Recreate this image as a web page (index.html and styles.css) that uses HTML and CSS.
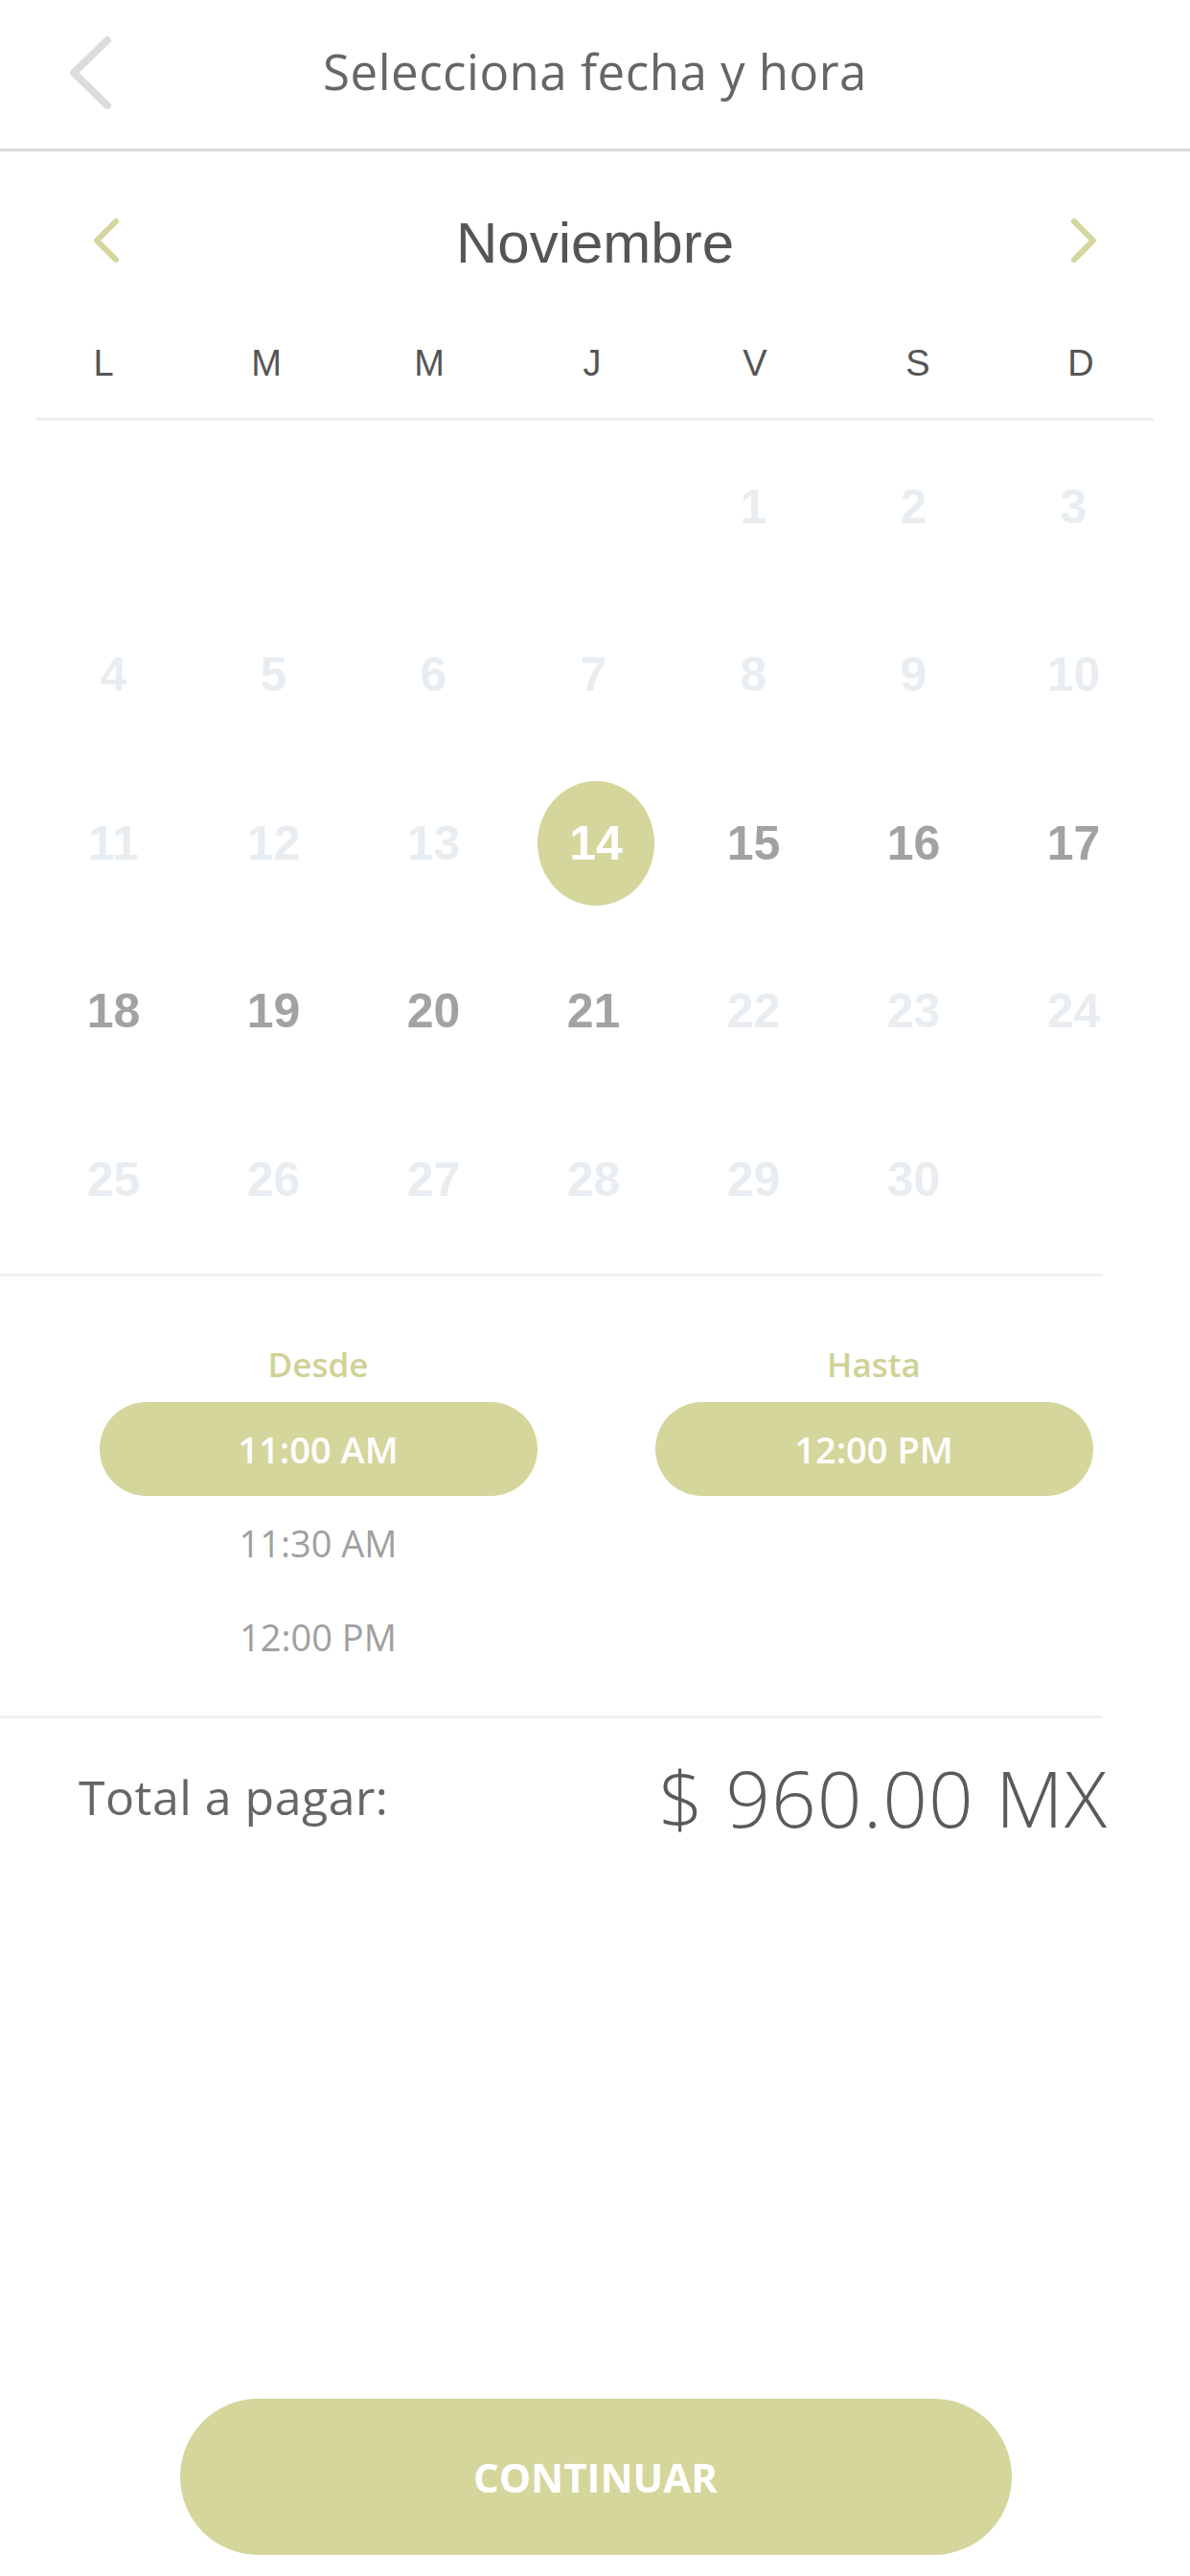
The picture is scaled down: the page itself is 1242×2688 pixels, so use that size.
FILE: index.html
```html
<!DOCTYPE html>
<html lang="es">
<head>
    <meta charset="UTF-8">
    <meta name="viewport" content="width=device-width, initial-scale=1.0">
    <title>Selecciona fecha y hora</title>
    <link rel="stylesheet" href="styles.css">
</head>
<body>
<div class="page">
    <header class="topbar">
        <button class="back" aria-label="Regresar">
            <svg width="50" height="80" viewBox="0 0 50 80"><polyline points="42,6 7,40 42,74" fill="none" stroke="#dcdcdc" stroke-width="8" stroke-linecap="round" stroke-linejoin="round"/></svg>
        </button>
        <h1 class="title">Selecciona fecha y hora</h1>
        <span></span>
    </header>

    <section class="calendar">
        <div class="month-nav">
            <button class="nav-btn" aria-label="Mes anterior">
                <svg width="30" height="48" viewBox="0 0 30 48"><polyline points="25,4 5,24 25,44" fill="none" stroke="#d4d69c" stroke-width="6" stroke-linecap="round" stroke-linejoin="round"/></svg>
            </button>
            <div class="month">Noviembre</div>
            <button class="nav-btn" aria-label="Mes siguiente">
                <svg width="30" height="48" viewBox="0 0 30 48"><polyline points="5,4 25,24 5,44" fill="none" stroke="#d4d69c" stroke-width="6" stroke-linecap="round" stroke-linejoin="round"/></svg>
            </button>
        </div>
        <div class="weekdays">
            <span>L</span><span>M</span><span>M</span><span>J</span><span>V</span><span>S</span><span>D</span>
        </div>
        <div class="rule"></div>
        <div class="days">
            <span></span><span></span><span></span><span></span>
            <span class="day off">1</span><span class="day off">2</span><span class="day off">3</span>
            <span class="day off">4</span><span class="day off">5</span><span class="day off">6</span><span class="day off">7</span><span class="day off">8</span><span class="day off">9</span><span class="day off">10</span>
            <span class="day off">11</span><span class="day off">12</span><span class="day off">13</span><span class="day selected"><b>14</b></span><span class="day">15</span><span class="day">16</span><span class="day">17</span>
            <span class="day">18</span><span class="day">19</span><span class="day">20</span><span class="day">21</span><span class="day off">22</span><span class="day off">23</span><span class="day off">24</span>
            <span class="day off">25</span><span class="day off">26</span><span class="day off">27</span><span class="day off">28</span><span class="day off">29</span><span class="day off">30</span><span></span>
        </div>
    </section>

    <div class="rule-full"></div>

    <section class="times">
        <div class="time-col">
            <div class="time-label">Desde</div>
            <div class="pill">11:00 AM</div>
            <div class="time-opt">11:30 AM</div>
            <div class="time-opt">12:00 PM</div>
        </div>
        <div class="time-col">
            <div class="time-label">Hasta</div>
            <div class="pill">12:00 PM</div>
        </div>
    </section>

    <div class="rule-full"></div>

    <section class="total">
        <span class="total-label">Total a pagar:</span>
        <span class="total-amount">$ 960.00 MX</span>
    </section>

    <footer class="footer">
        <button class="continue">CONTINUAR</button>
    </footer>
</div>
</body>
</html>
```

FILE: styles.css
```css
body {
    margin: 0;
    background: #ffffff;
    font-family: "Open Sans", "Noto Sans", sans-serif;
}
button {
    border: none;
    background: none;
    padding: 0;
    cursor: pointer;
}
.page {
    min-height: 2688px;
    display: flex;
    flex-direction: column;
}
.topbar {
    height: 155px;
    border-bottom: 3px solid #d9d9d9;
    display: grid;
    grid-template-columns: 180px 1fr 180px;
    align-items: center;
}
.back {
    display: flex;
    padding-left: 70px;
    margin-top: -4px;
}
.title {
    margin: 0;
    text-align: center;
    font-size: 51px;
    font-weight: 400;
    letter-spacing: 0.5px;
    color: #666;
    margin-top: -8px;
}
.month-nav {
    display: flex;
    justify-content: space-between;
    align-items: center;
    padding: 62px 96px 0 96px;
    height: 64px;
}
.nav-btn {
    display: flex;
    margin-top: -2px;
}
.month {
    font-family: "Liberation Sans", Arial, sans-serif;
    font-size: 60px;
    line-height: 64px;
    color: #555;
    margin-top: 3px;
}
.weekdays {
    display: grid;
    grid-template-columns: repeat(7, 170px);
    margin: 70px 0 0 23px;
    font-family: "Liberation Sans", Arial, sans-serif;
    font-size: 38px;
    line-height: 50px;
    color: #555;
    text-align: center;
}
.rule {
    height: 3px;
    background: #efefef;
    margin: 32px 38px 0 38px;
}
.days {
    display: grid;
    grid-template-columns: repeat(7, 167px);
    grid-auto-rows: 175.5px;
    margin-left: 35px;
    padding-top: 2px;
    font-family: "Liberation Sans", Arial, sans-serif;
    font-size: 50px;
    font-weight: bold;
    color: #a2a2a2;
}
.day {
    display: flex;
    align-items: center;
    justify-content: center;
}
.day.off {
    color: #e8edf1;
}
.selected b {
    width: 122px;
    height: 130px;
    border-radius: 50%;
    background: #d4d69c;
    color: #fff;
    display: flex;
    align-items: center;
    justify-content: center;
    margin-left: 5px;
}
.rule-full {
    width: 1151px;
    height: 3px;
    background: #f0f0f0;
}
.calendar + .rule-full {
    margin-top: 10px;
}
.times {
    display: grid;
    grid-template-columns: 580px 580px;
    padding: 70px 0 33px 42px;
}
.time-col {
    display: flex;
    flex-direction: column;
    align-items: center;
}
.time-label {
    font-size: 35px;
    font-weight: 600;
    line-height: 44px;
    color: #cfd296;
    margin-bottom: 17px;
}
.pill {
    width: 457px;
    height: 98px;
    border-radius: 49px;
    background: #d4d69c;
    color: #fff;
    font-size: 38px;
    font-weight: 600;
    display: flex;
    align-items: center;
    justify-content: center;
}
.time-opt {
    height: 98px;
    line-height: 98px;
    font-size: 38px;
    font-weight: 500;
    color: #a0a0a0;
}
.total {
    display: flex;
    justify-content: space-between;
    align-items: center;
    margin-top: 34px;
    padding: 0 86px 0 82px;
    color: #666;
}
.total-label {
    font-size: 50px;
    font-weight: 400;
    letter-spacing: 0.5px;
}
.total-amount {
    font-size: 82px;
    line-height: 96px;
    font-weight: 300;
    letter-spacing: 1px;
    color: #5a5a5a;
}
.footer {
    margin-top: auto;
    display: flex;
    justify-content: center;
    padding-bottom: 22px;
}
.continue {
    width: 868px;
    height: 163px;
    border-radius: 82px;
    background: #d4d69c;
    color: #fff;
    font-family: "Open Sans", sans-serif;
    font-size: 42px;
    font-weight: 700;
    margin-left: 1px;
}
```
